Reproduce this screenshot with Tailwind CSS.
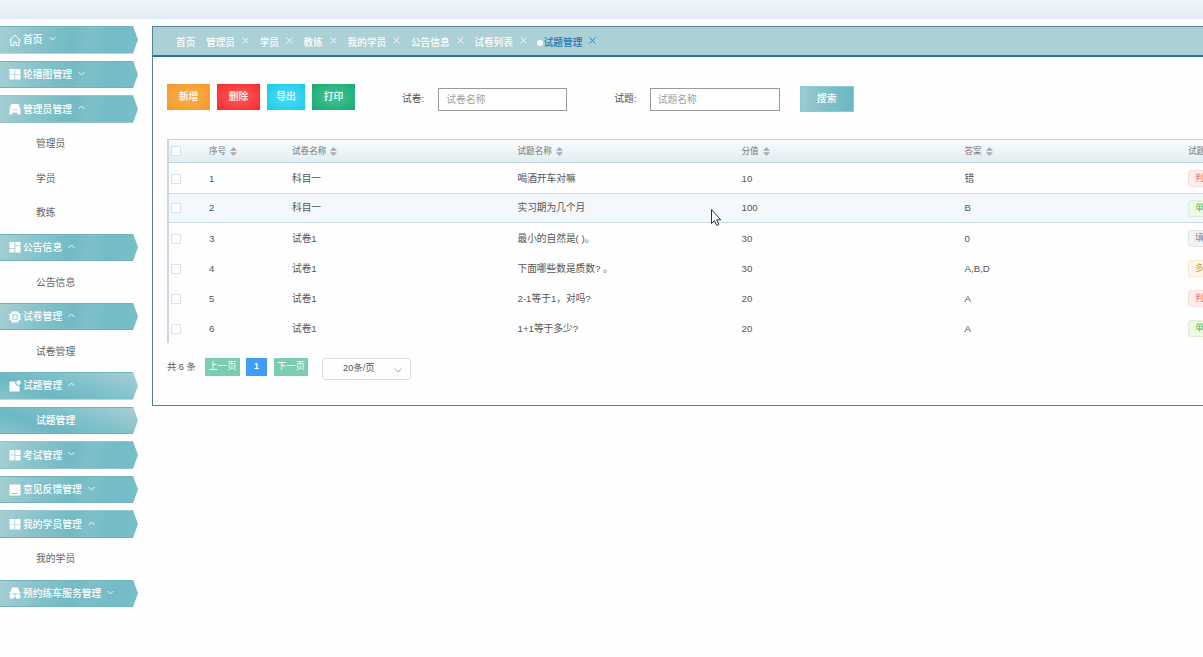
<!doctype html>
<html lang="zh-CN">

<head>
  <meta charset="UTF-8">
  <meta name="viewport" content="width=device-width, initial-scale=1.0">
  <title>试题管理</title>
  <script src="https://cdn.jsdelivr.net/npm/@tailwindcss/browser@4"></script>
</head>

<body class="h-screen overflow-hidden bg-[#fdfefd] font-['Liberation_Sans','Noto_Sans_CJK_SC',sans-serif] text-[9.8px] leading-none text-[#555]">
  <header class="h-[19px] bg-linear-to-b from-[#f0f6f9] to-[#e0edf3]"></header>

  <div class="flex pt-[7px]">
    <!-- Sidebar -->
    <nav id="menu" class="flex w-[152px] shrink-0 flex-col gap-[7px]"></nav>

    <!-- Main panel -->
    <main class="h-[380px] min-w-0 grow overflow-hidden border border-r-0 border-[#56819c]">
      <div id="tabs" class="flex h-[30px] items-center gap-[10.6px] border-b-2 border-[#2d709c] bg-[#abd0d5] pt-[3px] pl-[23px] text-[9.7px] font-medium text-white"></div>

      <!-- Buttons and search -->
      <div class="flex items-start pt-[27px] pl-[14px]">
        <div class="flex gap-[7px] text-white">
          <button class="h-[26px] w-[43px] bg-radial from-[#fab04a] to-[#f39a27] font-medium">新增</button>
          <button class="h-[26px] w-[43px] bg-radial from-[#ff5a5a] to-[#f3262e] font-medium">删除</button>
          <button class="h-[26px] w-[38px] bg-radial from-[#4fdcf5] to-[#06cbeb] font-medium">导出</button>
          <button class="h-[26px] w-[43px] bg-radial from-[#3fc795] to-[#1aa873] font-medium">打印</button>
        </div>
        <label class="ml-[47px] flex h-[30px] items-center">试卷:
          <input class="ml-[14px] h-[23px] w-[129px] border border-[#999] bg-white px-[7px] placeholder:text-[#a0a0a0]" placeholder="试卷名称">
        </label>
        <label class="ml-[47px] flex h-[30px] items-center">试题:
          <input class="ml-[13px] h-[23px] w-[130px] border border-[#999] bg-white px-[7px] placeholder:text-[#a0a0a0]" placeholder="试题名称">
        </label>
        <button class="mt-[2px] ml-[20px] h-[26px] w-[54px] border border-[#8fc9d2] bg-linear-to-r from-[#9ccbd0] via-[#7fbfc8] to-[#6bb8c5] font-medium text-white">搜索</button>
      </div>

      <!-- Table -->
      <div class="mt-[25px] ml-[14px] w-[1100px] border-l-2 border-[#cdd5e2]">
        <div id="head" class="flex h-[24px] items-center border-t border-b border-t-[#c3d3dc] border-b-[#bfd6e0] bg-linear-to-b from-[#fafcfd] to-[#e0edf3] text-[8.6px] text-[#777]"></div>
        <div id="rows"></div>
      </div>

      <!-- Pagination -->
      <div class="flex items-start pt-[15px] pl-[14px]">
        <span class="w-[38px] pt-[5px] text-[9.2px] whitespace-nowrap">共 6 条</span>
        <button class="h-[18px] w-[35px] bg-[#7bccb0] pb-[1px] text-[9.3px] text-white">上一页</button>
        <button class="ml-[6px] h-[18px] w-[21px] bg-[#409bfa] pb-[1px] text-[9px] font-bold text-white">1</button>
        <button class="ml-[7px] h-[18px] w-[34px] bg-[#7bccb0] pb-[1px] text-[9.3px] text-white">下一页</button>
        <div class="ml-[14px] flex h-[22px] w-[89px] items-center justify-between rounded-[3px] border border-[#dcdfe2] pr-[8px] pl-[20px] text-[9.3px]">
          20条/页
          <svg class="mt-[2px] h-[5px] w-[8px]" viewBox="0 0 8 5" fill="none" stroke="#aaa"><path d="M.5.5 4 4 7.5.5"/></svg>
        </div>
      </div>
    </main>
  </div>

  <!-- Mouse pointer -->
  <svg class="absolute top-[208px] left-[710px] h-[19px] w-[12px]" viewBox="0 0 12 19" fill="#fff" stroke="#333" stroke-width="1"><path d="M1.5 1.5v14l3-3 2.2 5 2.2-1-2.2-4.7h4z"/></svg>

  <script>
    const icons = {
      home: '<path d="M.5 6.500 6 1l5.500 5.500M2 5.500V11.500h2.800V8h2.400v3.500H10V5.500" fill="none" stroke="#fff"/>',
      grid: '<path d="M.5 1h5v5.300h-5zM6.200 1h5.300v5.300H6.200zM.5 6.800h5v4.700h-5zM6.200 6.800h5.300v4.700H6.200z"/>',
      board: '<path d="M.5 1h5v6h-5zM6.300 1h5.200v3.500H6.300zM.5 7.800h5v3.700h-5zM6.300 5.300h5.200v6.200H6.300z"/>',
      user: '<path fill-rule="evenodd" d="M3 1h6q1.500 0 1.500 2v1.700h1v1.800h-1.200V7h1.200v4.500h-3V9.800h-5v1.700h-3V7h1.200v-.5H.5V4.700h1V3Q1.500 1 3 1zM3.500 6.500h5v.8h-5z"/>',
      chip: '<path fill-rule="evenodd" d="M3 0h1.200v1.200h1.200V0h1.200v1.200h1.200V0H9v1.200l1.800 1.800H12v1.200h-1.200v1.200H12v1.200h-1.200v1.200H12V9h-1.200L9 10.800V12H7.800v-1.200H6.600V12H5.400v-1.200H4.200V12H3v-1.200L1.200 9H0V7.800h1.200V6.600H0V5.400h1.200V4.200H0V3h1.200L3 1.200zM3.300 3.300v5.400h5.400V3.300zM4.300 4.300h3.400v3.400H4.300z"/>',
      note: '<path d="M.5 1.500h6a3 3 0 0 0 4 4v6H.5z"/><circle cx="9.600" cy="2.600" r="2.300"/>',
      columns: '<path fill-rule="evenodd" d="M.5 1h5v10.500h-5zM6.300 1h5.200v5H6.300zM6.300 6.700h5.200v4.800H6.300zM1.500 5.500h3v1h-3z"/>',
      book: '<path fill-rule="evenodd" d="M.5 .5h11v11H.5zM2.500 9h6v1h-6z"/>',
      train: '<path d="M3 .5h6l1.500 4.500h1v1.500H.5V5h1z"/><circle cx="3" cy="9.200" r="2.500"/><circle cx="9" cy="9.200" r="2.500"/><path d="M4 8h4v1H4z"/>',
    };

    // [label, icon, chevron]; an entry without icon is a sub item
    const menu = [
      ['首页', 'home', 'down'], ['轮播图管理', 'grid', 'down'],
      ['管理员管理', 'user', 'up'], ['管理员'], ['学员'], ['教练'],
      ['公告信息', 'board', 'up'], ['公告信息'],
      ['试卷管理', 'chip', 'up'], ['试卷管理'],
      ['试题管理', 'note', 'up', true], ['试题管理', null, null, true],
      ['考试管理', 'columns', 'down'], ['意见反馈管理', 'book', 'down'],
      ['我的学员管理', 'grid', 'up'], ['我的学员'],
      ['预约练车服务管理', 'train', 'down'],
    ];
    const arrow = '[clip-path:polygon(0_0,133px_0,100%_50%,133px_100%,0_100%)]';
    const normal = 'border-y border-[#72b2bc] bg-linear-[105deg,#a6cfd3_0%,#8ac4cb_25%,#73bac4_52%,#7ec0c9_64%,#72bbc7_80%,#7abfca_100%]';
    const active = 'border-y border-[#72b2bc] bg-linear-[20deg,#88c5cc_0%,#6cb7c4_30%,#80c2cb_60%,#a9cfd3_100%]';

    document.getElementById('menu').innerHTML = menu.map(([label, icon, dir, on]) => {
      if (!icon) {
        return `<a class="flex h-[27.6px] w-[138px] shrink-0 items-center pt-[1px] pl-[36px] ${on ? arrow + ' font-medium text-white ' + active : 'text-[#666]'}">${label}</a>`;
      }
      const chevron = dir == 'up' ? 'M.5 4 3.500 1l3 3' : 'M.5 1l3 3 3-3';
      return `<a class="flex h-[27.6px] w-[138px] shrink-0 items-center pl-[9px] font-medium text-white ${arrow} ${on ? active : normal}">
        <svg class="mr-[2px] size-[12px]" viewBox="0 0 12 12" fill="#fff">${icons[icon]}</svg><span class="pt-[1px]">${label}</span>
        <svg class="mb-[2px] ml-[6px] h-[5px] w-[7px]" viewBox="0 0 7 5" fill="none" stroke="#fff" stroke-width=".9"><path d="${chevron}"/></svg></a>`;
    }).join('');

    const tabs = ['首页', '管理员', '学员', '教练', '我的学员', '公告信息', '试卷列表', '试题管理'];
    document.getElementById('tabs').innerHTML = tabs.map((t, i) => {
      const last = i == tabs.length - 1;
      const close = i ? '<svg class="mb-[5px] ml-[7px] size-[7px]" viewBox="0 0 7 7" stroke="currentColor" stroke-width=".9"><path d="M.5.5l6 6M6.500.5l-6 6"/></svg>' : '';
      return `<span class="flex items-center ${last ? 'ml-[-1px] text-[#2378ae]' : ''}">${last ? '<i class="mt-[1px] mr-[1px] size-[6px] rounded-full bg-white"></i>' : ''}${t}${close}</span>`;
    }).join('');

    const box = '<span class="mr-[28px] ml-[2px] size-[10px] shrink-0 border border-[#dcdfe6] bg-white"></span>';
    const widths = ['w-[83px]', 'w-[225.5px]', 'w-[224px]', 'w-[223px]', 'w-[223.5px]', 'w-[80px]'];
    const sort = '<svg class="ml-[4px] h-[9px] w-[7px]" viewBox="0 0 7 9" fill="#a5abb2"><path d="M0 3.700 3.500 0 7 3.700zM0 5.300h7L3.500 9z"/></svg>';
    document.getElementById('head').innerHTML = box + ['序号', '试卷名称', '试题名称', '分值', '答案', '试题类型'].map((h, i) =>
      `<span class="flex shrink-0 items-center ${widths[i]}">${h}${sort}</span>`).join('');

    const tags = {
      '判断题': 'border-[#fbdcdc] bg-[#fdeeee] text-[#ee6b6b]',
      '单选题': 'border-[#d9efcf] bg-[#edf8e8] text-[#67b945]',
      '填空题': 'border-[#e3e4e6] bg-[#f2f2f3] text-[#85888d]',
      '多选题': 'border-[#f8e8cd] bg-[#fdf6ea] text-[#dd9e38]',
    };
    const rows = [
      ['1', '科目一', '喝酒开车对嘛', '10', '错', '判断题'],
      ['2', '科目一', '实习期为几个月', '100', 'B', '单选题'],
      ['3', '试卷1', '最小的自然是( )。', '30', '0', '填空题'],
      ['4', '试卷1', '下面哪些数是质数? 。', '30', 'A,B,D', '多选题'],
      ['5', '试卷1', '2-1等于1，对吗?', '20', 'A', '判断题'],
      ['6', '试卷1', '1+1等于多少?', '20', 'A', '单选题'],
    ];
    document.getElementById('rows').innerHTML = rows.map((r, n) =>
      `<div class="flex h-[30px] items-center text-[9.7px] ${n == 1 ? 'border-y border-[#cbdfe9] bg-[#f3f8fc]' : 'pt-[1px]'}">${box}` + r.map((c, i) =>
        `<span class="shrink-0 ${widths[i]}">${i == 5 ? `<em class="inline-block rounded-[3px] border px-[6px] py-[3px] text-[9px] not-italic ${tags[c]}">${c}</em>` : c}</span>`).join('') + '</div>').join('');
  </script>
</body>

</html>
